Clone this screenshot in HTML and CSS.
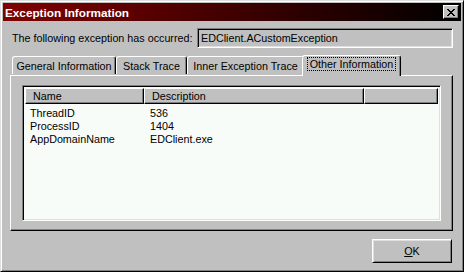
FILE: index.html
```html
<!DOCTYPE html>
<html lang="en">
    <head>
        <meta charset="UTF-8">
        <title>Exception Information</title>
        <link rel="stylesheet" href="styles.css">
    </head>
    <body>
        <div class="window">
            <div class="titlebar">
                <span class="title">Exception Information</span>
                <button type="button" class="close_button">
                    <svg width="8" height="7" viewBox="0 0 8 7">
                        <path d="M0 0h2v1h-2zM6 0h2v1h-2zM1 1h2v1h-2zM5 1h2v1h-2zM2 2h4v1h-4zM3 3h2v1h-2zM2 4h4v1h-4zM1 5h2v1h-2zM5 5h2v1h-2zM0 6h2v1h-2zM6 6h2v1h-2z" fill="#000"/>
                    </svg>
                </button>
            </div>

            <div class="content">
                <div class="message_row">
                    <span>The following exception has occurred:</span>
                    <div class="textbox">EDClient.ACustomException</div>
                </div>

                <div class="tabs">
                    <div class="tab tab_general">General Information</div>
                    <div class="tab tab_stack">Stack Trace</div>
                    <div class="tab tab_inner">Inner Exception Trace</div>
                    <div class="tab tab_other selected"><span class="focus">Other Information</span></div>
                </div>

                <div class="panel">
                    <div class="listview">
                        <div class="list_header">
                            <div class="col_head">Name</div>
                            <div class="col_head">Description</div>
                            <div class="col_head"></div>
                        </div>
                        <div class="list_row">
                            <span>ThreadID</span><span>536</span>
                        </div>
                        <div class="list_row">
                            <span>ProcessID</span><span>1404</span>
                        </div>
                        <div class="list_row">
                            <span>AppDomainName</span><span>EDClient.exe</span>
                        </div>
                    </div>
                </div>

                <div class="buttons">
                    <button type="button" class="button"><u>O</u>K</button>
                </div>
            </div>
        </div>
    </body>
</html>
```

FILE: styles.css
```css
* {
    margin: 0;
    padding: 0;
    box-sizing: border-box;
}
body {
    background-color: #c0c0c0;
    font-family: "Liberation Sans", Arial, sans-serif;
    font-size: 10.75px;
    color: #000;
}
.window {
    width: 464px;
    height: 272px;
    padding: 1px;
    background-color: #c0c0c0;
    border: 1px solid;
    border-color: #dfdfdf #000 #000 #dfdfdf;
    box-shadow: inset 1px 1px #fff, inset -1px -1px #808080;
}
.titlebar {
    display: flex;
    align-items: center;
    justify-content: space-between;
    height: 18px;
    margin: 1px;
    padding: 0 2px;
    background: linear-gradient(to right, #800000, #000);
}
.title {
    color: #fff;
    font-weight: bold;
    font-size: 11.75px;
}
.close_button {
    display: flex;
    align-items: center;
    justify-content: center;
    width: 16px;
    height: 14px;
    background-color: #c0c0c0;
    border: 1px solid;
    border-color: #fff #000 #000 #fff;
    box-shadow: inset -1px -1px #808080;
}
.close_button svg {
    display: block;
    margin-left: -1px;
}
.content {
    padding: 0 9px 0 8px;
}
.message_row {
    display: flex;
    align-items: center;
    justify-content: space-between;
    margin-top: 7px;
    padding-left: 2px;
}
.textbox {
    width: 256px;
    height: 20px;
    padding: 3px 0 0 3px;
    border: 1px solid;
    border-color: #808080 #fff #fff #808080;
    box-shadow: inset 1px 1px #000, inset -1px -1px #dfdfdf;
}
.tabs {
    display: flex;
    align-items: flex-end;
    margin-top: 6px;
    padding-left: 2px;
    height: 21px;
    position: relative;
    z-index: 1;
}
.tab {
    height: 18px;
    padding-top: 3px;
    text-align: center;
    border: 1px solid;
    border-bottom: none;
    border-color: #fff #000 #000 #fff;
    border-radius: 3px 3px 0 0;
    box-shadow: inset -1px 0 #808080;
    margin-bottom: 1px;
    white-space: nowrap;
}
.tab_general {
    width: 104px;
}
.tab_stack {
    width: 71px;
}
.tab_inner {
    width: 117px;
}
.tab_other {
    width: 99px;
}
.tab.selected {
    height: 21px;
    margin: 0 -2px -1px -2px;
    padding-top: 2px;
    background-color: #c0c0c0;
}
.focus {
    padding: 0 2px;
    outline: 1px dotted #000;
}
.panel {
    height: 156px;
    padding: 9px 11px 0 11px;
    border: 1px solid;
    border-color: #fff #000 #000 #fff;
    box-shadow: inset -1px -1px #808080;
}
.listview {
    height: 136px;
    padding: 2px;
    background-color: #f8fcf8;
    border: 1px solid;
    border-color: #808080 #fff #fff #808080;
    box-shadow: inset 1px 1px #000, inset -1px -1px #dfdfdf;
}
.list_header {
    display: grid;
    grid-template-columns: 119px 220px 1fr;
    height: 16px;
}
.col_head {
    padding: 1px 0 0 7px;
    background-color: #c0c0c0;
    border: 1px solid;
    border-color: #fff #000 #000 #fff;
    box-shadow: inset -1px -1px #808080;
}
.list_row {
    display: grid;
    grid-template-columns: 120px 1fr;
    height: 13px;
    padding-left: 5px;
}
.list_header + .list_row {
    margin-top: 3px;
}
.buttons {
    display: flex;
    justify-content: flex-end;
    margin-top: 8px;
    padding-right: 1px;
}
.button {
    width: 80px;
    height: 24px;
    font-family: "Liberation Sans", Arial, sans-serif;
    font-size: 10.75px;
    background-color: #c0c0c0;
    border: 1px solid;
    border-color: #fff #000 #000 #fff;
    box-shadow: inset 1px 1px #dfdfdf, inset -1px -1px #808080;
}
```
